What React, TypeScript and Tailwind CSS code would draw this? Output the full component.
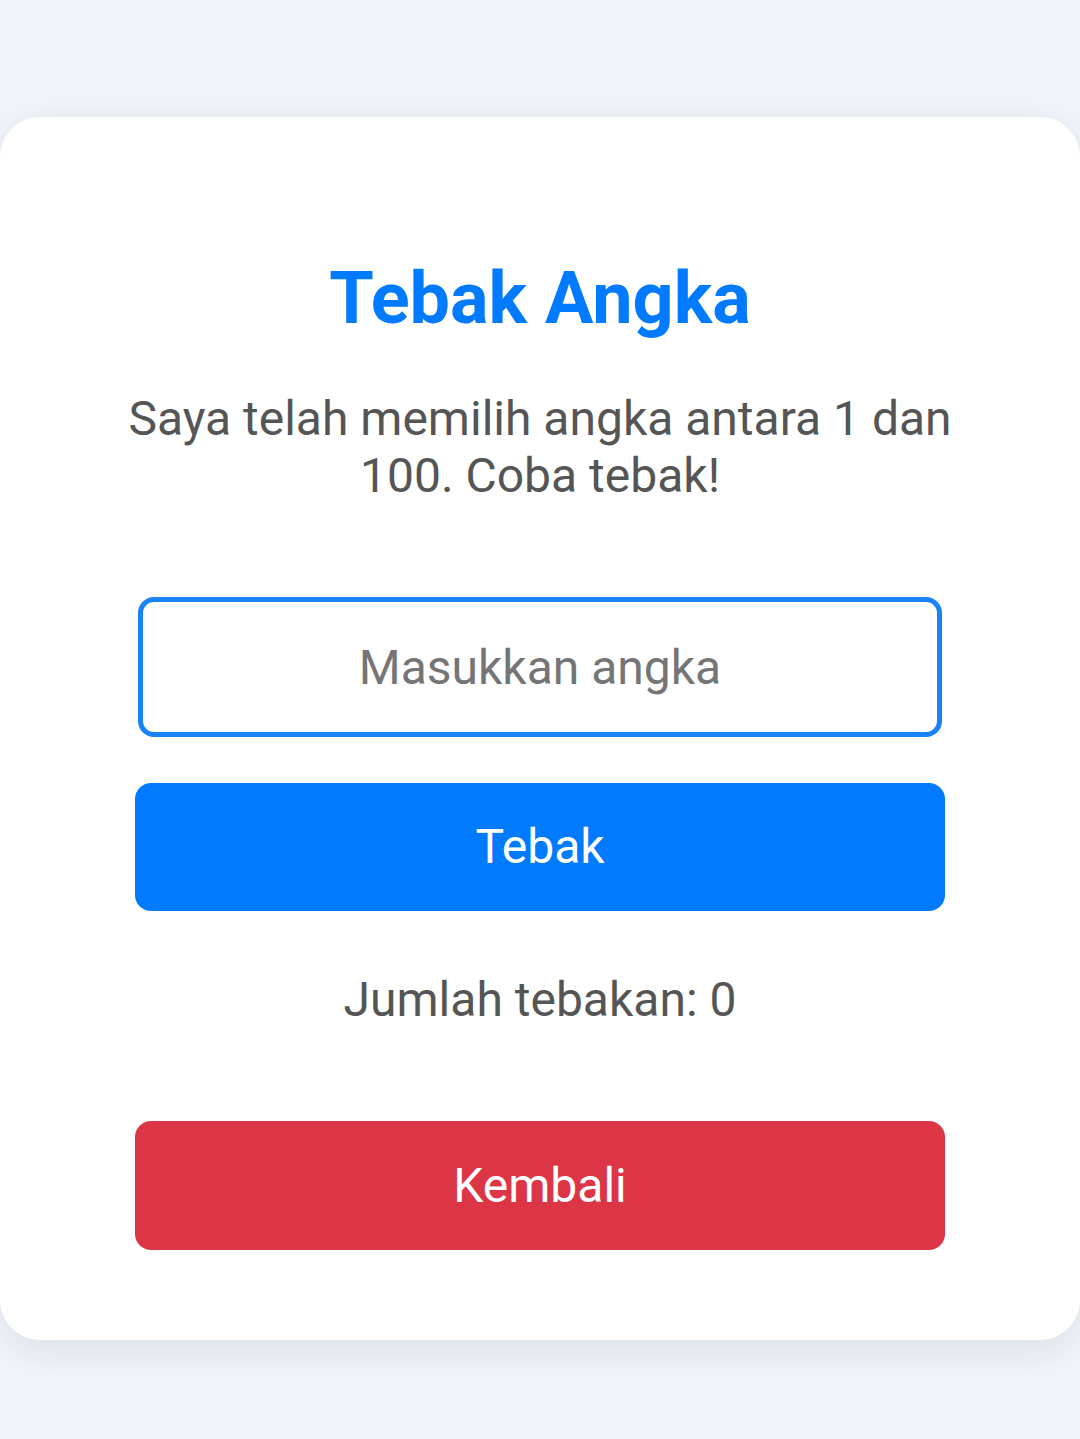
import React, { useState } from 'react'

export default function App() {
  const [guess, setGuess] = useState('')
  const [count, setCount] = useState(0)

  return (
    <div className="min-h-[1439px] bg-[#f1f4f9] pt-[117px] font-['Roboto',sans-serif]">
      <div className="flex flex-col items-center rounded-[40px] bg-white pt-[139px] pb-[90px] shadow-[0_10px_40px_rgba(30,40,80,0.10)]">
        <h1 className="text-[72px] leading-[86px] font-bold text-[#007bff]">Tebak Angka</h1>
        <p className="mt-[48px] w-[860px] text-center text-[48px] leading-[57px] text-[#555555]">
          Saya telah memilih angka antara 1 dan 100. Coba tebak!
        </p>
        <input
          value={guess}
          onChange={(e) => setGuess(e.target.value)}
          placeholder="Masukkan angka"
          className="mt-[93px] h-[140px] w-[804px] rounded-[16px] border-[5px] border-[#1a82f7] text-center text-[48px] text-[#333] outline-none placeholder:text-[#757575]"
        />
        <button
          onClick={() => setCount(count + 1)}
          className="mt-[46px] h-[128px] w-[810px] rounded-[16px] bg-[#007bff] text-[48px] text-white"
        >
          Tebak
        </button>
        <p className="mt-[60px] text-[48px] leading-[57px] text-[#555555]">Jumlah tebakan: {count}</p>
        <button className="mt-[93px] h-[129px] w-[810px] rounded-[16px] bg-[#dc3545] text-[48px] text-white">
          Kembali
        </button>
      </div>
    </div>
  )
}
